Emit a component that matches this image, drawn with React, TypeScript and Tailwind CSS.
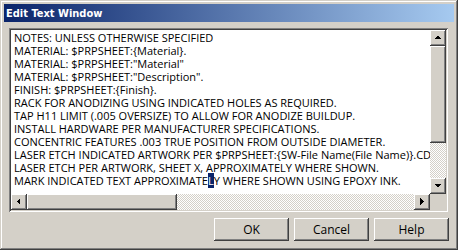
import React from "react";

const lines: React.ReactNode[] = [
  "NOTES: UNLESS OTHERWISE SPECIFIED",
  "MATERIAL: $PRPSHEET:{Material}.",
  'MATERIAL: $PRPSHEET:"Material"',
  'MATERIAL: $PRPSHEET:"Description".',
  "FINISH: $PRPSHEET:{Finish}.",
  "RACK FOR ANODIZING USING INDICATED HOLES AS REQUIRED.",
  "TAP H11 LIMIT (.005 OVERSIZE) TO ALLOW FOR ANODIZE BUILDUP.",
  "INSTALL HARDWARE PER MANUFACTURER SPECIFICATIONS.",
  "CONCENTRIC FEATURES .003 TRUE POSITION FROM OUTSIDE DIAMETER.",
  "LASER ETCH INDICATED ARTWORK PER $PRPSHEET:{SW-File Name(File Name)}.CDR",
  "LASER ETCH PER ARTWORK, SHEET X, APPROXIMATELY WHERE SHOWN.",
  <>
    MARK INDICATED TEXT APPROXIMATE
    <span className="bg-[#0a246a] text-white">L</span>Y WHERE SHOWN USING EPOXY INK.
  </>,
];

const raised =
  "shadow-[inset_-1px_-1px_0_#404040,inset_1px_1px_0_#ffffff,inset_-2px_-2px_0_#808080,inset_2px_2px_0_#d4d0c8]";

function ArrowBtn({ dir }: { dir: "up" | "down" | "left" | "right" }) {
  const pts =
    dir === "up"
      ? "4,9 7.5,5.5 11,9"
      : dir === "down"
      ? "4,6 7.5,9.5 11,6"
      : dir === "left"
      ? "9,4 5.5,7.5 9,11"
      : "6,4 9.5,7.5 6,11";
  return (
    <div className={`w-[16px] h-[16px] shrink-0 bg-[#d4d0c8] ${raised} flex items-center justify-center`}>
      <svg width="16" height="16" viewBox="0 0 16 16" shapeRendering="crispEdges">
        <polygon points={pts} fill="#000" />
      </svg>
    </div>
  );
}

const checker =
  "bg-[repeating-conic-gradient(#d4d0c8_0%_25%,#ffffff_0%_50%)] bg-[length:2px_2px]";

function Btn({ label }: { label: string }) {
  return (
    <div className="w-[75px] h-[23px] bg-[#d4d0c8] shadow-[inset_-1px_-1px_0_#404040,inset_1px_1px_0_#ffffff,inset_-2px_-2px_0_#808080] flex items-center justify-center text-[12px] text-black">
      {label}
    </div>
  );
}

export default function App() {
  return (
    <div
      className="w-[458px] h-[250px] bg-[#d4d0c8] shadow-[inset_-1px_-1px_0_#404040,inset_1px_1px_0_#d4d0c8,inset_-2px_-2px_0_#808080,inset_2px_2px_0_#ffffff] p-[4px] flex flex-col overflow-hidden"
      style={{ fontFamily: '"Open Sans", "Noto Sans", sans-serif' }}
    >
      <div className="h-[18px] shrink-0 bg-[linear-gradient(to_right,#0a246a,#a6caf0)] flex items-center pl-[2px]">
        <span
          className="text-white font-bold text-[11px] leading-none"
          style={{ fontFamily: '"DejaVu Sans Condensed", "DejaVu Sans", sans-serif', fontStretch: "condensed" }}
        >
          Edit Text Window
        </span>
      </div>
      <div className="mt-[6px] ml-[5px] mr-[6px] h-[184px] shrink-0 shadow-[inset_1px_1px_0_#808080,inset_-1px_-1px_0_#ffffff,inset_2px_2px_0_#404040,inset_-2px_-2px_0_#d4d0c8] p-[2px] flex flex-col">
        <div className="flex flex-1 min-h-0">
          <div className="flex-1 min-w-0 bg-white overflow-hidden pl-[3px] pt-[1px] text-[11px] leading-[13px] text-black whitespace-nowrap">
            {lines.map((l, i) => (
              <div key={i}>{l}</div>
            ))}
          </div>
          <div className="w-[16px] flex flex-col">
            <ArrowBtn dir="up" />
            <div className={`h-[97px] shrink-0 bg-[#d4d0c8] ${raised}`} />
            <div className={`flex-1 ${checker}`} />
            <ArrowBtn dir="down" />
          </div>
        </div>
        <div className="h-[16px] flex shrink-0">
          <ArrowBtn dir="left" />
          <div className={`w-[150px] h-[16px] shrink-0 bg-[#d4d0c8] ${raised}`} />
          <div className={`flex-1 ${checker}`} />
          <ArrowBtn dir="right" />
          <div className="w-[16px] h-[16px] bg-[#d4d0c8]" />
        </div>
      </div>
      <div className="flex justify-end gap-[5px] mt-[6px] mr-[5px]">
        <Btn label="OK" />
        <Btn label="Cancel" />
        <Btn label="Help" />
      </div>
    </div>
  );
}
